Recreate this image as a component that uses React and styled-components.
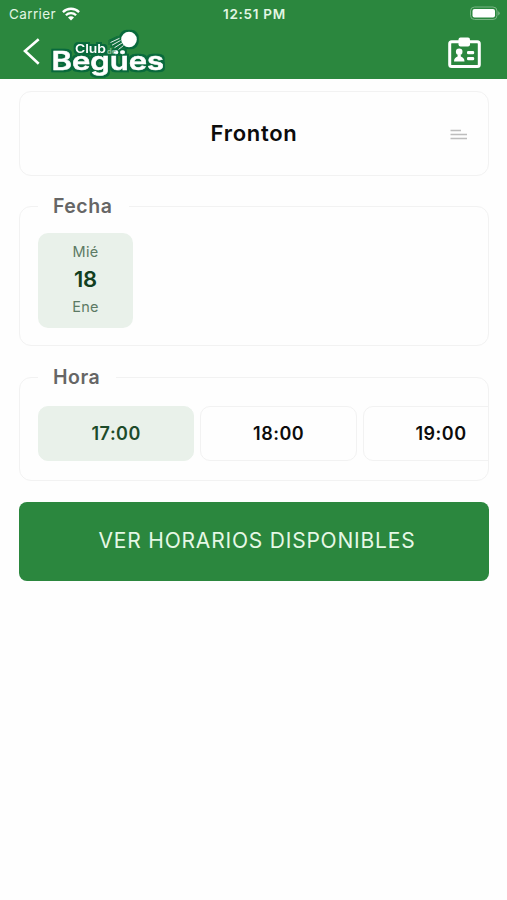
import React from 'react'
import styled, { createGlobalStyle } from 'styled-components'

const GlobalStyle = createGlobalStyle`
    * { box-sizing: border-box; }
    body {
        margin: 0;
        background: #fefefe;
        font-family: Inter, 'Liberation Sans', sans-serif;
    }
`
const Head = styled.header`
    height: 79px;
    background: #2b873e;
    color: #fff;
`
const StatusBar = styled.div`
    display: grid;
    grid-template-columns: 1fr auto 1fr;
    align-items: center;
    height: 27px;
    padding: 0 7px 0 9px;
    font-size: 13.5px;
    color: #e2f6e3;
`
const Carrier = styled.div`
    display: flex;
    align-items: center;
    gap: 6px;
    letter-spacing: 0.38px;
`
const Clock = styled.div`
    font-size: 13.5px;
    font-weight: 600;
    letter-spacing: 0.7px;
`
const Battery = styled.svg`
    justify-self: end;
`
const NavBar = styled.div`
    display: flex;
    align-items: center;
    height: 52px;
    padding: 0 26px 0 22px;
`
const Logo = styled.svg`
    margin-left: 6px;
    margin-right: auto;
`
const Content = styled.main`
    padding: 12px 18px 0 19px;
`
const Court = styled.div`
    display: grid;
    grid-template-columns: 1fr auto 1fr;
    align-items: center;
    height: 85px;
    padding: 0 20px;
    border: 1px solid #f2f2f2;
    border-radius: 12px;
`
const CourtName = styled.div`
    grid-column: 2;
    padding-bottom: 2px;
    font-size: 22px;
    font-weight: 600;
    letter-spacing: 0.7px;
    color: #0c0c0c;
`
const MenuIcon = styled.svg`
    justify-self: end;
`
const Group = styled.fieldset`
    min-width: 0;
    height: ${props => props.$height};
    margin: ${props => props.$gap} 0 0;
    padding: ${props => props.$padding};
    border: 1px solid #f2f2f2;
    border-radius: 12px;
`
const Legend = styled.legend`
    width: ${props => props.$width};
    height: 25px;
    padding: 0 0 0 15px;
    font-size: 19.5px;
    font-weight: 600;
    line-height: 25px;
    letter-spacing: 0.5px;
    color: #666;
`
const Day = styled.div`
    display: flex;
    flex-direction: column;
    align-items: center;
    width: 95px;
    height: 95px;
    padding-top: 9px;
    border-radius: 10px;
    background: #e9f1ea;
    color: #5c7a64;
    font-size: 14.5px;
    line-height: 20px;
    letter-spacing: 0.3px;
`
const DayNumber = styled.strong`
    font-size: 22px;
    font-weight: 600;
    line-height: 35px;
    letter-spacing: -0.2px;
    color: #123f20;
`
const Hours = styled.div`
    display: flex;
    gap: 6px;
    overflow: hidden;
`
const Hour = styled.div`
    flex: 0 0 156.4px;
    height: 55px;
    border: 1px solid ${props => (props.$active ? '#e9f1ea' : '#f2f2f2')};
    border-radius: 10px;
    background: ${props => (props.$active ? '#e9f1ea' : 'transparent')};
    color: ${props => (props.$active ? '#1d4b2a' : '#0c0c0c')};
    font-size: 18px;
    font-weight: 600;
    line-height: 53px;
    text-align: center;
    letter-spacing: 0.5px;
`
const Submit = styled.button`
    display: block;
    width: 100%;
    height: 79px;
    margin-top: 21px;
    padding: 0 0 2px 6px;
    border: none;
    border-radius: 8px;
    background: #2b873e;
    color: #e6f8e6;
    font-family: inherit;
    font-size: 21px;
    font-weight: 400;
    letter-spacing: 0.8px;
`

const ClubLogo = () => (
  <Logo width="122" height="50" viewBox="46 27 122 50" fontFamily="Inter, sans-serif">
    <defs>
      <filter id="outline" filterUnits="userSpaceOnUse" x="46" y="27" width="122" height="50" colorInterpolationFilters="sRGB">
        <feMorphology in="SourceAlpha" operator="dilate" radius="2" result="spread" />
        <feGaussianBlur in="spread" stdDeviation="0.7" result="soft" />
        <feFlood floodColor="#08693c" />
        <feComposite in2="soft" operator="in" />
        <feMerge>
          <feMergeNode />
          <feMergeNode in="SourceGraphic" />
        </feMerge>
      </filter>
    </defs>
    <g filter="url(#outline)" fill="#fff">
      <text x="51.500" y="68.700" fontSize="25.500" fontWeight="600" stroke="#fff" strokeWidth="0.500" textLength="112.500" lengthAdjust="spacingAndGlyphs">Begües</text>
      <text x="75" y="52" fontSize="12" fontWeight="600" textLength="31" lengthAdjust="spacingAndGlyphs">Club</text>
      <circle cx="129" cy="38.500" r="7.800" />
      <path d="M110.500 41.500l9-4.200M112 44.200l8.500-4.700M114.500 46.700l7.500-4.700M118.500 48.500l5-4" stroke="#fff" strokeWidth="0.900" />
    </g>
    <text x="107" y="52.500" fontSize="7" fontWeight="500" fill="#8fc0a0" textLength="9" lengthAdjust="spacingAndGlyphs">de</text>
  </Logo>
)

const hours = ['17:00', '18:00', '19:00']

export default function App() {
  return (
    <>
      <GlobalStyle />
      <Head>
        <StatusBar>
          <Carrier>
            Carrier
            <svg width="18" height="14" viewBox="0 0 18 14" fill="none" stroke="#fff" strokeWidth="2.3">
              <path d="M0.900 5.100a11.500 11.500 0 0 1 16.200 0M3.900 8.300a7.200 7.200 0 0 1 10.200 0" />
              <path d="M6 10.500a4.200 4.200 0 0 1 6 0l-3 3z" fill="#fff" stroke="none" />
            </svg>
          </Carrier>
          <Clock>12:51 PM</Clock>
          <Battery width="31" height="15" viewBox="0 0 31 15">
            <rect x="1.500" y="1" width="26.500" height="12.500" rx="4" fill="none" stroke="#79b584" />
            <rect x="3.500" y="3" width="22.500" height="8.500" rx="2" fill="#fff" />
            <path d="M29.200 5.200v4.200q1.500-.7 1.500-2.100t-1.500-2.100z" fill="#79b584" />
          </Battery>
        </StatusBar>
        <NavBar>
          <svg width="18" height="30" viewBox="0 0 18 30" fill="none" stroke="#fff" strokeWidth="2.600">
            <path d="M16.700 1.200L3 13L16.700 25.700" />
          </svg>
          <ClubLogo />
          <svg width="33" height="32" viewBox="0 0 33 32" fill="#fff">
            <rect x="1.700" y="4.700" width="29.600" height="24.800" rx="2" fill="none" stroke="#fff" strokeWidth="3" />
            <rect x="10.500" y="0.500" width="11.500" height="9" rx="2" />
            <circle cx="11.200" cy="14.700" r="3.300" />
            <path d="M6 24.500c0-3 1.500-4.300 3.600-5v-2h3.200v2c2.100.7 3.700 2 3.700 5z" />
            <rect x="19" y="14" width="7.200" height="3.300" rx="1.300" />
            <rect x="19" y="20" width="7.200" height="3.300" rx="1.300" />
          </svg>
        </NavBar>
      </Head>
      <Content>
        <Court>
          <CourtName>Fronton</CourtName>
          <MenuIcon width="18" height="12" viewBox="0 0 18 12" stroke="#bdbdbd" strokeWidth="1.500">
            <path d="M0.500 2.500h10.500M0.500 6.500h16.500M0.500 10.500h16.500" />
          </MenuIcon>
        </Court>
        <Group $gap="18px" $height="152px" $padding="14px 0 0 18px">
          <Legend $width="91px">Fecha</Legend>
          <Day>
            <span>Mié</span>
            <DayNumber>18</DayNumber>
            <span>Ene</span>
          </Day>
        </Group>
        <Group $gap="19px" $height="116px" $padding="16px 0 0 18px">
          <Legend $width="78px">Hora</Legend>
          <Hours>
            {hours.map((hour, i) => (
              <Hour key={hour} $active={i === 0}>{hour}</Hour>
            ))}
          </Hours>
        </Group>
        <Submit>VER HORARIOS DISPONIBLES</Submit>
      </Content>
    </>
  )
}
